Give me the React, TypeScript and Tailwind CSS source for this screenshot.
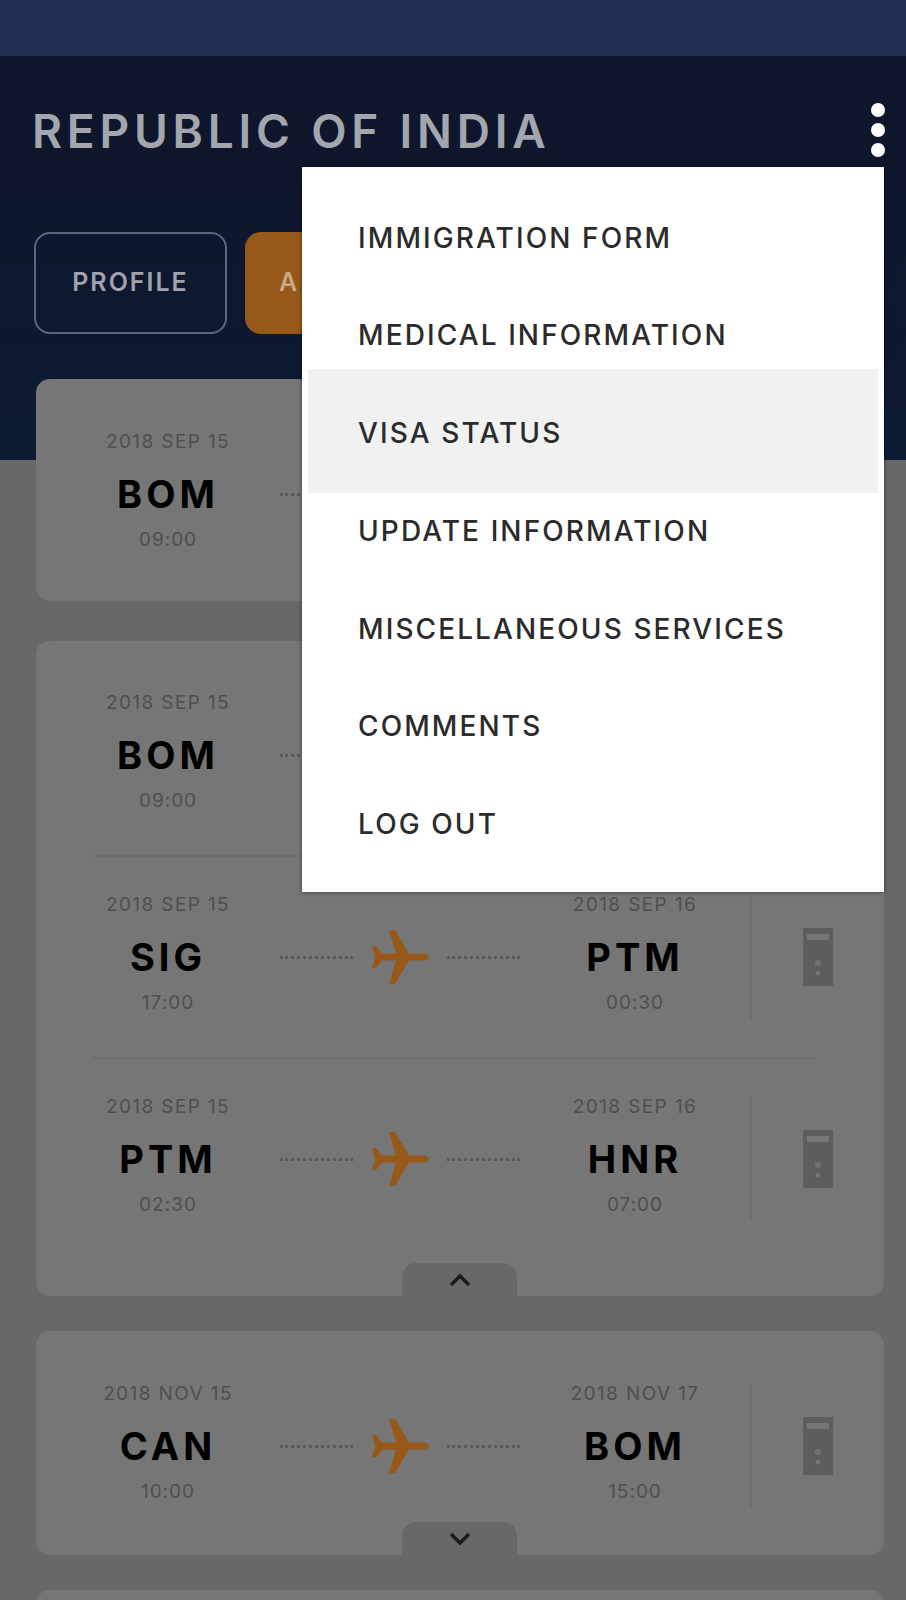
import React from 'react';

const FONT = "font-['Inter','Liberation_Sans',sans-serif]";

type Stop = { date: string; code: string; time: string };
type Leg = { from: Stop; to?: Stop };

const menuItems = [
  'IMMIGRATION FORM',
  'MEDICAL INFORMATION',
  'VISA STATUS',
  'UPDATE INFORMATION',
  'MISCELLANEOUS SERVICES',
  'COMMENTS',
  'LOG OUT',
];

function Plane() {
  return (
    <svg className="w-[58px] h-[58px] shrink-0" viewBox="0 0 58 58" fill="#96591a">
      <path d="M58 29c0-2-3-3.5-6-3.5H38L24 2h-6l7 23.5H11L5 18H1l3 11-3 11h4l6-7.5h14L18 56h6l14-23.5h14c3 0 6-1.5 6-3.5z" />
    </svg>
  );
}

function Dots() {
  return <div className="flex-1 border-t-[3px] border-dotted border-[#5a5a5a]" />;
}

function Luggage() {
  return (
    <svg className="w-[30px] h-[58px]" viewBox="0 0 30 58" fill="#5d5d5d">
      <path d="M0 0h30v12h-4V6H4v6H0z" />
      <rect x="0" y="12" width="30" height="46" rx="1" />
      <circle cx="15" cy="35" r="3" fill="#737373" />
      <circle cx="15" cy="45" r="2.5" fill="#737373" />
    </svg>
  );
}

function Place({ stop }: { stop: Stop }) {
  return (
    <div className="w-[200px] h-[122px] mt-[-6px] shrink-0 flex flex-col items-center justify-between">
      <div className="text-[19px] leading-[24px] tracking-[1.4px] text-[#4f4f4f]">{stop.date}</div>
      <div className="mt-[3px] mb-[-3px] text-[38px] leading-[46px] font-bold tracking-[4px] text-black">{stop.code}</div>
      <div className="text-[19px] leading-[24px] tracking-[1px] text-[#4f4f4f]">{stop.time}</div>
    </div>
  );
}

function Row({ leg }: { leg: Leg }) {
  return (
    <div className="h-[200px] pl-[32px] flex items-center">
      <Place stop={leg.from} />
      <div className="w-[240px] ml-[12px] flex items-center gap-[18px] shrink-0">
        <Dots />
        <Plane />
        <Dots />
      </div>
      {leg.to && (
        <>
          <div className="ml-[15px]">
            <Place stop={leg.to} />
          </div>
          <div className="ml-[15px] w-[2px] h-[124px] bg-[#6e6e6e]" />
          <div className="flex-1 flex justify-center">
            <Luggage />
          </div>
        </>
      )}
    </div>
  );
}

function Tab({ up }: { up: boolean }) {
  return (
    <div className="absolute left-[366px] bottom-0 w-[115px] h-[33px] rounded-t-[14px] bg-[#686868] flex items-center justify-center">
      <svg className="w-[24px] h-[16px]" viewBox="0 0 24 16" fill="none" stroke="#1c1c1c" strokeWidth="3.5">
        <path d={up ? 'M3 13l9-9 9 9' : 'M3 3l9 9 9-9'} />
      </svg>
    </div>
  );
}

const sigToPtm: Leg = {
  from: { date: '2018 SEP 15', code: 'SIG', time: '17:00' },
  to: { date: '2018 SEP 16', code: 'PTM', time: '00:30' },
};
const ptmToHnr: Leg = {
  from: { date: '2018 SEP 15', code: 'PTM', time: '02:30' },
  to: { date: '2018 SEP 16', code: 'HNR', time: '07:00' },
};
const canToBom: Leg = {
  from: { date: '2018 NOV 15', code: 'CAN', time: '10:00' },
  to: { date: '2018 NOV 17', code: 'BOM', time: '15:00' },
};

export default function App() {
  return (
    <div className={`relative h-[1600px] overflow-hidden bg-[#686868] ${FONT}`}>
      <div className="h-[56px] bg-[#232e57]" />

      {/* dark header */}
      <div className="h-[404px] bg-gradient-to-b from-[#10152a] to-[#0c1a33] pt-[50px]">
        <div className="flex items-center justify-between pl-[32px] pr-[21px] h-[50px]">
          <div className="text-[46px] leading-[50px] font-semibold tracking-[4.8px] text-[#a4a6ad] whitespace-nowrap">REPUBLIC OF INDIA</div>
          <div className="flex flex-col gap-[6px] mt-[-3px]">
            <div className="w-[14px] h-[14px] rounded-full bg-white" />
            <div className="w-[14px] h-[14px] rounded-full bg-white" />
            <div className="w-[14px] h-[14px] rounded-full bg-white" />
          </div>
        </div>
        <div className="mt-[76px] pl-[34px] flex gap-[18px]">
          <div className="w-[193px] h-[102px] rounded-[16px] border-2 border-[#5a6780] flex items-center justify-center text-[25px] font-semibold tracking-[2px] text-[#a0a3ad]">
            PROFILE
          </div>
          <div className="w-[193px] h-[102px] rounded-[16px] bg-[#96591a] flex items-center pl-[34px] text-[25px] font-semibold text-[#c9a888]">
            A
          </div>
        </div>
      </div>

      {/* trip cards */}
      <div className="mt-[-81px] pl-[36px] pr-[22px] relative">
        <div className="rounded-[14px] bg-[#767676] pt-[15px] pb-[7px] relative">
          <Row leg={{ from: { date: '2018 SEP 15', code: 'BOM', time: '09:00' } }} />
        </div>

        <div className="mt-[40px] rounded-[14px] bg-[#767676] pt-[14px] pb-[37px] relative">
          <Row leg={{ from: { date: '2018 SEP 15', code: 'BOM', time: '09:00' } }} />
          <div className="ml-[56px] mr-[68px] h-[2px] bg-[#6e6e6e]" />
          <Row leg={sigToPtm} />
          <div className="ml-[56px] mr-[68px] h-[2px] bg-[#6e6e6e]" />
          <Row leg={ptmToHnr} />
          <Tab up />
        </div>

        <div className="mt-[35px] rounded-[14px] bg-[#767676] pt-[15px] pb-[9px] relative">
          <Row leg={canToBom} />
          <Tab up={false} />
        </div>

        <div className="mt-[35px] h-[60px] rounded-[14px] bg-[#767676]" />
      </div>

      {/* overflow menu */}
      <div className="absolute left-[302px] top-[167px] w-[582px] h-[725px] bg-white pt-[22px] shadow-[0_0_4px_rgba(0,0,0,0.5)]">
        {menuItems.map((item) =>
          item === 'VISA STATUS' ? (
            <div
              key={item}
              className="relative mx-[6px] mt-[-15px] mb-[-11px] h-[124px] pl-[50px] pt-[4px] bg-[#f0f1f1] flex items-center text-[28px] font-medium tracking-[2.1px] text-[#2b2b2b]"
            >
              {item}
            </div>
          ) : (
            <div key={item} className="relative h-[97.6px] pl-[56px] flex items-center text-[28px] font-medium tracking-[2.1px] text-[#2b2b2b]">
              {item}
            </div>
          ),
        )}
      </div>
    </div>
  );
}
